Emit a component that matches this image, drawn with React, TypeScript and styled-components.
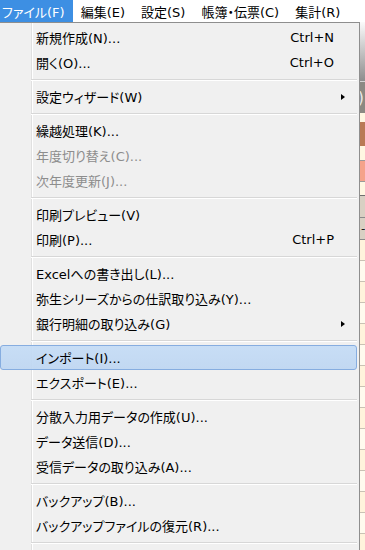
import React from "react";
import styled, { createGlobalStyle } from "styled-components";

const GlobalStyle = createGlobalStyle`
  html, body { margin: 0; padding: 0; }
  body {
    width: 365px;
    height: 550px;
    overflow: hidden;
    background: #ffffff;
    font-family: "DejaVu Sans", "Noto Sans CJK JP", sans-serif;
  }
`;

const Screen = styled.div`
  position: relative;
  width: 365px;
  height: 550px;
  overflow: hidden;
`;

const MenuBar = styled.div`
  display: flex;
  height: 22px;
  margin-left: -6px;
  background: #ffffff;
`;

const BarItem = styled.div<{ $active?: boolean }>`
  display: flex;
  align-items: center;
  height: 22px;
  padding: 0 8px;
  font-size: 13px;
  font-feature-settings: "palt";
  white-space: nowrap;
  color: ${(p) => (p.$active ? "#ffffff" : "#000000")};
  background: ${(p) => (p.$active ? "#3d8fe3" : "transparent")};
`;

const Body = styled.div`
  display: flex;
  flex-direction: column;
`;

const Toolbar = styled.div`
  height: 60px;
  box-sizing: border-box;
  background: linear-gradient(#fbfbfb, #8d8d8d);
  border-bottom: 1px solid #d4d4d4;
`;

const GridHeader = styled.div`
  height: 31px;
  display: flex;
  align-items: center;
  padding-left: 358px;
  background: #8b8983;
  color: #ececec;
  font-size: 15px;
  white-space: nowrap;
`;

const Band = styled.div<{ $bg: string; $h: number; $line?: string }>`
  height: ${(p) => p.$h}px;
  box-sizing: border-box;
  display: flex;
  align-items: center;
  padding-left: 361px;
  font-size: 12px;
  color: #222;
  background: ${(p) => p.$bg};
  border-bottom: ${(p) => (p.$line ? `1px solid ${p.$line}` : "none")};
`;

const Dropdown = styled.div`
  position: absolute;
  left: -3px;
  top: 22px;
  width: 363px;
  box-sizing: border-box;
  padding: 2px 2px 30px;
  border: 1px solid #8e8e8e;
  background-color: #f0f0f0;
  background-image: linear-gradient(
    to right,
    transparent 33px,
    #e0e0e0 33px,
    #e0e0e0 34px,
    #ffffff 34px,
    #ffffff 35px,
    transparent 35px
  );
  display: flex;
  flex-direction: column;
`;

const Item = styled.div<{ $hot?: boolean; $disabled?: boolean }>`
  display: grid;
  grid-template-columns: 1fr auto 22px;
  align-items: center;
  height: 25px;
  box-sizing: border-box;
  padding-left: 35px;
  font-size: 13px;
  font-feature-settings: "palt";
  white-space: nowrap;
  color: ${(p) => (p.$disabled ? "#8d8d8d" : "#000000")};
  border: 1px solid ${(p) => (p.$hot ? "#86ade0" : "transparent")};
  border-radius: 3px;
  background: ${(p) =>
    p.$hot ? "linear-gradient(rgba(196,220,246,0.92), rgba(190,214,242,0.92))" : "transparent"};
`;

const Shortcut = styled.span`
  text-align: right;
`;

const ArrowCell = styled.span`
  display: flex;
  align-items: center;
  padding-left: 7px;
`;

const Arrow = styled.span`
  width: 0;
  height: 0;
  border-left: 4px solid #000;
  border-top: 3.5px solid transparent;
  border-bottom: 3.5px solid transparent;
`;

const Sep = styled.div`
  height: 9px;
  margin-left: 31px;
  background: linear-gradient(
    transparent 4px,
    #d7d7d7 4px,
    #d7d7d7 5px,
    #ffffff 5px,
    #ffffff 6px,
    transparent 6px
  );
`;

type Entry =
  | { sep: true }
  | { sep?: false; l: string; s?: string; sub?: boolean; d?: boolean; hot?: boolean };

const entries: Entry[] = [
  { l: "新規作成(N)...", s: "Ctrl+N" },
  { l: "開く(O)...", s: "Ctrl+O" },
  { sep: true },
  { l: "設定ウィザード(W)", sub: true },
  { sep: true },
  { l: "繰越処理(K)..." },
  { l: "年度切り替え(C)...", d: true },
  { l: "次年度更新(J)...", d: true },
  { sep: true },
  { l: "印刷プレビュー(V)" },
  { l: "印刷(P)...", s: "Ctrl+P" },
  { sep: true },
  { l: "Excelへの書き出し(L)..." },
  { l: "弥生シリーズからの仕訳取り込み(Y)..." },
  { l: "銀行明細の取り込み(G)", sub: true },
  { sep: true },
  { l: "インポート(I)...", hot: true },
  { l: "エクスポート(E)..." },
  { sep: true },
  { l: "分散入力用データの作成(U)..." },
  { l: "データ送信(D)..." },
  { l: "受信データの取り込み(A)..." },
  { sep: true },
  { l: "バックアップ(B)..." },
  { l: "バックアップファイルの復元(R)..." },
  { sep: true },
];

const bands: { bg: string; h: number; line?: string; t?: string }[] = [
  { bg: "#fff7e2", h: 9 },
  { bg: "#b97a55", h: 24 },
  { bg: "#fff7e2", h: 15, line: "#9a9a9a" },
  { bg: "#f5a38a", h: 21, line: "#9a9a9a" },
  { bg: "#fff7e2", h: 14, line: "#6f6f6f" },
  { bg: "#d8d0c3", h: 22, line: "#8a8a8a" },
  { bg: "#d8d0c3", h: 22, line: "#8a8a8a", t: "-" },
  ...Array.from({ length: 15 }, (_, i) => ({
    bg: i % 2 === 0 ? "#fff4dc" : "#fffbee",
    h: 21,
    line: "#c9c2b4",
  })),
];

export default function App() {
  return (
    <Screen>
      <GlobalStyle />
      <MenuBar>
        <BarItem $active>ファイル(F)</BarItem>
        <BarItem>編集(E)</BarItem>
        <BarItem>設定(S)</BarItem>
        <BarItem>帳簿・伝票(C)</BarItem>
        <BarItem>集計(R)</BarItem>
      </MenuBar>
      <Body>
        <Toolbar />
        <GridHeader>)</GridHeader>
        {bands.map((b, i) => (
          <Band key={i} $bg={b.bg} $h={b.h} $line={b.line}>
            {b.t}
          </Band>
        ))}
      </Body>
      <Dropdown>
        {entries.map((e, i) =>
          e.sep ? (
            <Sep key={i} />
          ) : (
            <Item key={i} $hot={e.hot} $disabled={e.d}>
              <span>{e.l}</span>
              <Shortcut>{e.s}</Shortcut>
              <ArrowCell>{e.sub && <Arrow />}</ArrowCell>
            </Item>
          )
        )}
      </Dropdown>
    </Screen>
  );
}
